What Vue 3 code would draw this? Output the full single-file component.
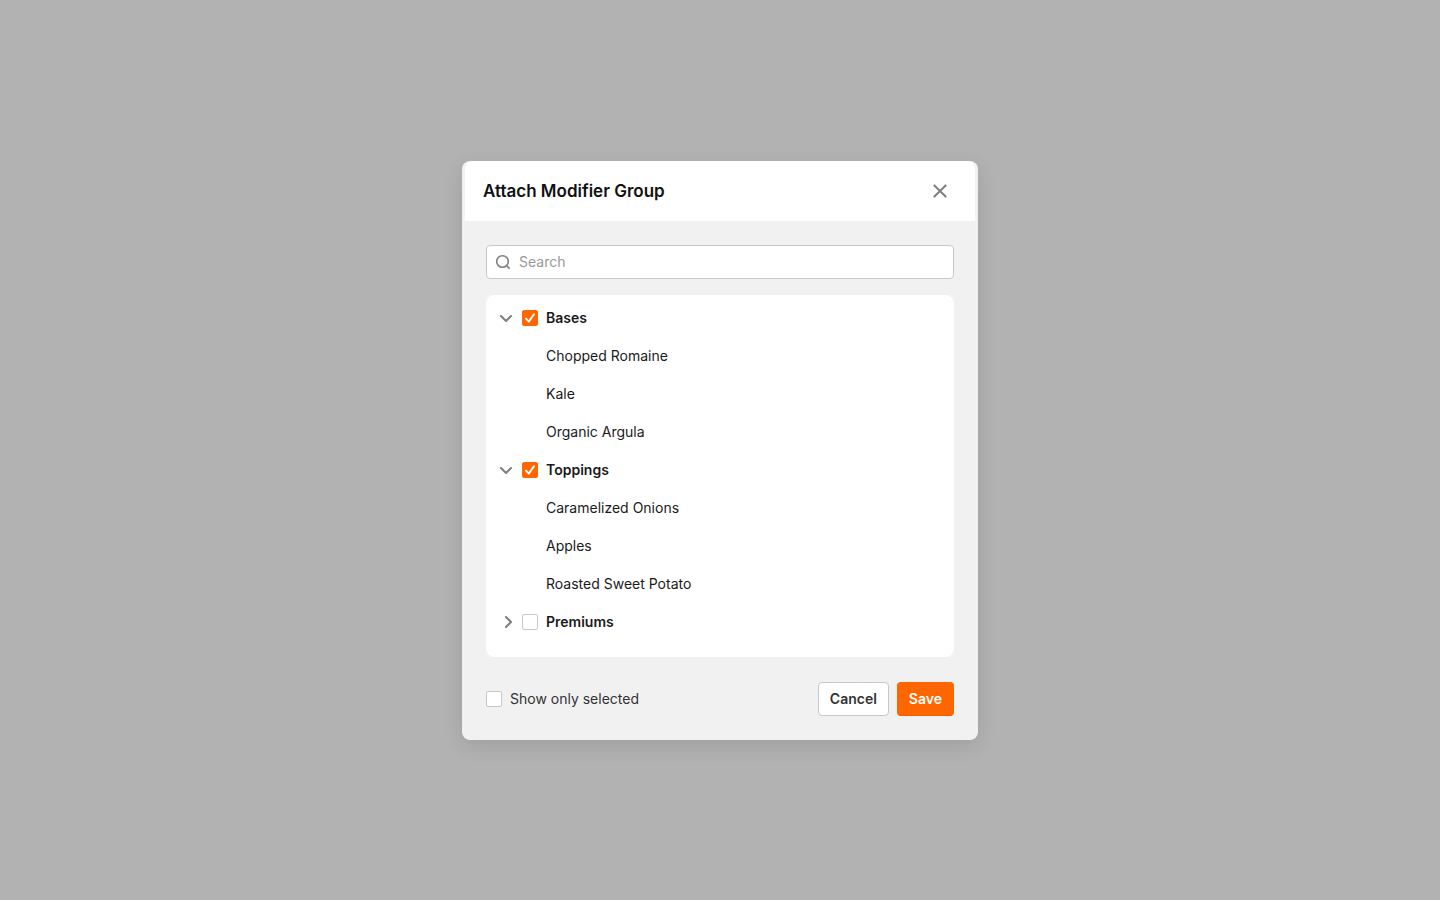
<script setup>
import { ref, reactive, computed } from 'vue'

const search = ref('')
const onlySelected = ref(false)
const groups = reactive([
  { name: 'Bases', open: true, checked: true, items: ['Chopped Romaine', 'Kale', 'Organic Argula'] },
  { name: 'Toppings', open: true, checked: true, items: ['Caramelized Onions', 'Apples', 'Roasted Sweet Potato'] },
  { name: 'Premiums', open: false, checked: false, items: [] },
])

const visibleGroups = computed(() => {
  const term = search.value.trim().toLowerCase()
  return groups.filter((group) => {
    if (onlySelected.value && !group.checked) return false
    return !term || [group.name, ...group.items].some((text) => text.toLowerCase().includes(term))
  })
})
</script>

<template>
  <div class="overlay">
    <section class="modal" role="dialog" aria-modal="true" aria-labelledby="modal-title">
      <header class="header">
        <h1 id="modal-title" class="title">Attach Modifier Group</h1>
        <button class="close" type="button" aria-label="Close">
          <svg width="16" height="16" viewBox="0 0 16 16" fill="none" stroke="currentColor" stroke-width="2.1" stroke-linecap="round">
            <path d="M2.4 2.4 13.6 13.6M13.6 2.4 2.4 13.6" />
          </svg>
        </button>
      </header>

      <div class="body">
        <label class="search">
          <svg width="16" height="16" viewBox="0 0 16 16" fill="none" stroke="currentColor" stroke-width="1.6" stroke-linecap="round">
            <circle cx="7.5" cy="7.5" r="5.8" />
            <path d="M11.7 11.7 14.1 14.1" />
          </svg>
          <input v-model="search" type="text" placeholder="Search" aria-label="Search" />
        </label>

        <ul class="list">
          <li v-for="group in visibleGroups" :key="group.name">
            <div class="row">
              <button
                class="toggle"
                type="button"
                :aria-label="'Toggle ' + group.name"
                :aria-expanded="group.open"
                @click="group.open = !group.open"
              >
                <svg width="16" height="16" viewBox="0 0 16 16" fill="none" stroke="currentColor" stroke-width="2.1" stroke-linecap="round" stroke-linejoin="round">
                  <path v-if="group.open" d="M3 6 8 11 13 6" />
                  <path v-else d="M8 3 13 8 8 13" />
                </svg>
              </button>
              <label class="check strong">
                <span class="box">
                  <input v-model="group.checked" type="checkbox" />
                  <svg v-if="group.checked" class="tick" width="16" height="16" viewBox="0 0 16 16" fill="none" stroke="#fff" stroke-width="1.9" stroke-linecap="round" stroke-linejoin="round">
                    <path d="M4 8.6 6.8 11.6 12 4.2" />
                  </svg>
                </span>
                {{ group.name }}
              </label>
            </div>
            <ul v-if="group.open" class="items">
              <li v-for="item in group.items" :key="item" class="item">{{ item }}</li>
            </ul>
          </li>
        </ul>

        <footer class="footer">
          <label class="check muted">
            <span class="box"><input v-model="onlySelected" type="checkbox" /></span>
            Show only selected
          </label>
          <div class="actions">
            <button class="btn" type="button">Cancel</button>
            <button class="btn primary" type="button">Save</button>
          </div>
        </footer>
      </div>
    </section>
  </div>
</template>

<style>
body {
  margin: 0;
  background: #b2b2b2;
}
</style>

<style scoped>
.overlay {
  box-sizing: border-box;
  min-height: 100vh;
  padding-top: 1px;
  display: flex;
  align-items: center;
  justify-content: center;
  background: #b2b2b2;
  font-family: Inter, "Liberation Sans", sans-serif;
  font-size: 14px;
  line-height: 20px;
  color: #1a1a1a;
}
.modal {
  width: 100%;
  max-width: 516px;
  background: #f1f1f1;
  border-radius: 8px;
  overflow: hidden;
  box-shadow: 0 6px 20px rgba(0, 0, 0, 0.11);
}
.header {
  display: flex;
  align-items: center;
  justify-content: space-between;
  height: 60px;
  margin: 0 3px;
  padding: 0 23px 0 18px;
  background: #fff;
  border-radius: 8px 8px 0 0;
}
.title {
  margin: 0;
  font-size: 17px;
  line-height: 24px;
  font-weight: 600;
  color: #111;
}
button {
  font: inherit;
  cursor: pointer;
}
.close,
.toggle {
  display: flex;
  padding: 0;
  border: 0;
  background: none;
  color: #808080;
}
.close {
  padding: 4px;
}
.body {
  padding: 24px;
}
.search {
  display: flex;
  align-items: center;
  gap: 8px;
  box-sizing: border-box;
  height: 34px;
  padding: 0 8px;
  border: 1px solid #c8c8c8;
  border-radius: 4px;
  background: #fff;
  color: #808080;
}
.search input {
  flex: 1;
  min-width: 0;
  padding: 0;
  border: 0;
  outline: 0;
  background: none;
  font: inherit;
  color: #1a1a1a;
}
.search input::placeholder {
  color: #999;
  opacity: 1;
}
ul {
  margin: 0;
  padding: 0;
  list-style: none;
}
.list {
  margin-top: 16px;
  padding: 4px 12px 16px;
  border-radius: 8px;
  background: #fff;
}
.row {
  display: flex;
  align-items: center;
  gap: 8px;
  height: 38px;
}
.items {
  padding-left: 48px;
}
.item {
  line-height: 38px;
}
.check {
  display: flex;
  align-items: center;
  gap: 8px;
}
.strong {
  font-weight: 600;
}
.muted {
  color: #333;
}
.box {
  position: relative;
  display: flex;
}
.box input {
  appearance: none;
  box-sizing: border-box;
  width: 16px;
  height: 16px;
  margin: 0;
  border: 1px solid #c8c8c8;
  border-radius: 2px;
  background: #fff;
}
.box input:checked {
  border-color: #ff6600;
  background: #ff6600;
}
.tick {
  position: absolute;
  inset: 0;
  pointer-events: none;
}
.footer {
  display: flex;
  align-items: center;
  justify-content: space-between;
  margin-top: 25px;
}
.actions {
  display: flex;
  gap: 8px;
}
.btn {
  box-sizing: border-box;
  height: 34px;
  padding: 0 11px;
  border: 1px solid #c8c8c8;
  border-radius: 4px;
  background: #fff;
  color: #333;
  font-weight: 600;
}
.primary {
  border-color: #ff6600;
  border-bottom-color: #ee5f00;
  background: #ff6600;
  color: #fff;
}
</style>
